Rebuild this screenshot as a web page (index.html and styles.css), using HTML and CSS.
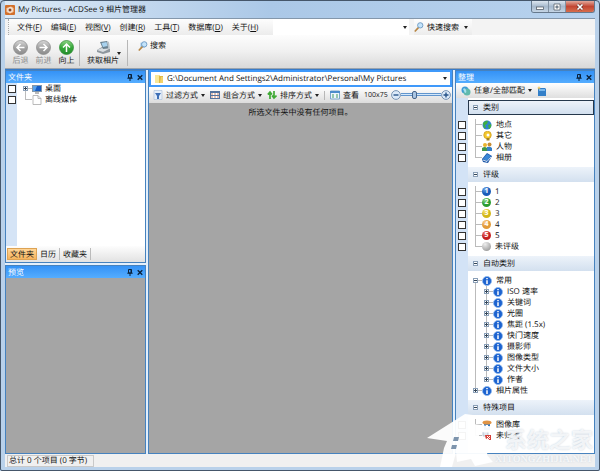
FILE: index.html
```html
<!DOCTYPE html>
<html lang="zh-CN">
<head>
	<meta charset="UTF-8">
	<title>My Pictures - ACDSee 9 相片管理器</title>
	<link rel="stylesheet" href="styles.css">
</head>
<body>
<svg class="defs" aria-hidden="true">
	<defs>
		<linearGradient id="grey" x2="0" y2="1"><stop stop-color="#d8d8d8"/><stop offset=".5" stop-color="#a4a4a4"/><stop offset="1" stop-color="#8c8c8c"/></linearGradient>
		<linearGradient id="green" x2="0" y2="1"><stop stop-color="#8fd487"/><stop offset=".5" stop-color="#36a83a"/><stop offset="1" stop-color="#248c2c"/></linearGradient>
	</defs>
	<symbol id="info" viewBox="0 0 10 10"><circle cx="5" cy="5" r="4.5" fill="#1d63cf" stroke="#8bb7ee" stroke-width=".8"/><path d="M5 2v1.300M5 4.200v3.800" fill="none" stroke="#fff" stroke-width="1.5"/></symbol>
	<symbol id="find" viewBox="0 0 12 12"><path d="M5 7 1.5 10.8" stroke="#b88745" stroke-width="2" stroke-linecap="round"/><circle cx="7.5" cy="4" r="3.2" fill="#c3e3fa" stroke="#6492bd"/></symbol>
	<symbol id="pin" viewBox="0 0 6 7"><path d="M1.5 .5h3v3.4h-3zM.3 4.2h5.4M3 4v3M4 .5v3" fill="none" stroke="#0a2038"/></symbol>
	<symbol id="cross" viewBox="0 0 6 6"><path d="m.7.7 4.6 4.6m0-4.6L.7 5.3" stroke="#0a2038" stroke-width="1.3"/></symbol>
</svg>
<div class="window">
	<header class="title">
		<svg class="logo" viewBox="0 0 10 10"><rect width="10" height="10" rx="1" fill="#d2702d"/><path d="M1.5 3 6 1.5 8.5 3v4L5 8.5 1.5 7z" fill="#f7d0ad"/><circle cx="5" cy="5" r="2" fill="#8f4824" stroke="#fff" stroke-width=".8"/></svg>
		<h1>My Pictures - ACDSee 9 相片管理器</h1>
		<div class="caption">
			<button aria-label="最小化"><svg viewBox="0 0 10 8"><rect x="1.5" y="4" width="7" height="2.5" fill="#fff" stroke="#59626c" stroke-width=".8"/></svg></button>
			<button aria-label="最大化"><svg viewBox="0 0 10 8"><path d="M2 1h6v6H2zM4 3h2v2H4z" fill="#fff" fill-rule="evenodd" stroke="#59626c" stroke-width=".8"/></svg></button>
			<button class="quit" aria-label="关闭"><svg viewBox="0 0 10 8"><path d="m2.5 1.5 5 5m0-5-5 5" stroke="#5f2a25" stroke-width="2.8"/><path d="m2.5 1.5 5 5m0-5-5 5" stroke="#fff" stroke-width="1.7"/></svg></button>
		</div>
	</header>
	<div class="client">
		<div class="menubar">
			<nav class="menu">
				<button>文件(<u>F</u>)</button>
				<button>编辑(<u>E</u>)</button>
				<button>视图(<u>V</u>)</button>
				<button>创建(<u>R</u>)</button>
				<button>工具(<u>T</u>)</button>
				<button>数据库(<u>D</u>)</button>
				<button>关于(<u>H</u>)</button>
			</nav>
			<div class="combo query"><select aria-label="搜索内容"><option></option></select></div>
			<button class="quick drop"><svg class="icon"><use href="#find"/></svg>快速搜索</button>
		</div>
		<div class="toolbar">
			<button class="big" disabled><svg viewBox="0 0 15 15"><circle cx="7.5" cy="7.5" r="7" fill="url(#grey)" stroke="#888" stroke-width=".7"/><path d="M11.5 7.5H4M7.5 4 4 7.5 7.5 11" fill="none" stroke="#fff" stroke-width="1.5"/></svg>后退</button>
			<button class="big" disabled><svg viewBox="0 0 15 15"><circle cx="7.5" cy="7.5" r="7" fill="url(#grey)" stroke="#888" stroke-width=".7"/><path d="M3.5 7.5H11M7.5 4 11 7.5 7.5 11" fill="none" stroke="#fff" stroke-width="1.5"/></svg>前进</button>
			<button class="big"><svg viewBox="0 0 15 15"><circle cx="7.5" cy="7.5" r="7" fill="url(#green)" stroke="#2c8a32" stroke-width=".7"/><path d="M7.5 12V4M4 7.5 7.5 4 11 7.5" fill="none" stroke="#fff" stroke-width="1.5"/></svg>向上</button>
			<span class="rule"></span>
			<button class="big get drop"><svg viewBox="0 0 15 15"><path d="m1 10 5-3 8 2v3l-7 2-6-2z" fill="#8e979e"/><path d="m1 10 5-2 7 1-6 3z" fill="#d9dee1"/><path d="m4 2 7-1 2 7-6 1z" fill="#69818f"/><path d="m5.5 3 5-1 1 4-4.5 1z" fill="#a9d3ef"/><path d="m11 1 2 1 1 7-2-1z" fill="#b8c2c8"/></svg>获取相片</button>
			<span class="rule"></span>
			<button class="search"><svg class="icon" viewBox="0 0 12 12"><path d="M3 2h5v6H3z" fill="#9cc5e6"/><use href="#find"/></svg>搜索</button>
		</div>
		<main class="panes">
			<div class="side">
				<section class="panel folders">
					<h2>文件夹<button aria-label="固定文件夹"><svg><use href="#pin"/></svg></button><button aria-label="关闭文件夹"><svg><use href="#cross"/></svg></button></h2>
					<ul class="tree">
						<li><input type="checkbox" id="desk"><i class="branch first"></i><i class="plus"></i><label for="desk"><svg class="icon" viewBox="0 0 10 10"><path d="M0 1h10v7H0z" fill="#8296a8"/><path d="M1 2h8v5H1z" fill="#155cc4"/><path d="M1 2h4L3 7H1z" fill="#56a2ec"/><path d="M3 9h4" stroke="#777"/></svg>桌面</label></li>
						<li><input type="checkbox" id="offline"><i class="branch last"></i><label for="offline"><svg class="icon" viewBox="0 0 10 10"><path d="M1 .5h5l3 3v6H1zM6 .5v3h3" fill="#fff" stroke="#aaa" stroke-width=".8"/></svg>离线媒体</label></li>
					</ul>
					<div class="tabs"><button class="active">文件夹</button><button>日历</button><button>收藏夹</button></div>
				</section>
				<section class="panel preview">
					<h2>预览<button aria-label="固定预览"><svg><use href="#pin"/></svg></button><button aria-label="关闭预览"><svg><use href="#cross"/></svg></button></h2>
				</section>
			</div>
			<section class="browser">
				<div class="address">
					<svg class="icon" viewBox="0 0 10 10"><path d="M1 1h4l1 1h3v7H1z" fill="#e0b944"/><path d="M1 1h4v8H1z" fill="#f9e797"/><path d="M7 3h2v6H6z" fill="#f2d36c"/></svg>
					<div class="combo"><select aria-label="路径"><option>G:\Document And Settings2\Administrator\Personal\My Pictures</option></select></div>
				</div>
				<div class="filters">
					<button class="drop"><svg class="icon" viewBox="0 0 10 10"><path d="M1 .5h8v9H1z" fill="#e5eef9" stroke="#a8bed9" stroke-width=".6"/><path d="M2 3h6L6 6v3H4V6z" fill="#3f70b7"/></svg>过滤方式</button>
					<button class="drop"><svg class="icon" viewBox="0 0 10 10"><path d="M0 1h10v8H0z" fill="#54739e"/><path d="M1 3h8v2H1zM1 6h8v2H1z" fill="#fff"/><path d="M1 4h8M1 7h8" stroke="#c8846a" stroke-dasharray="2 1"/></svg>组合方式</button>
					<button class="drop"><svg class="icon" viewBox="0 0 10 10"><path d="M3 9V3M.8 4.5 3 2l2 2.5M7 1v6M5 5.500 7 8l2.500-2.500" fill="none" stroke="#41aa36" stroke-width="1.7"/></svg>排序方式</button>
					<span class="rule"></span>
					<button><svg class="icon" viewBox="0 0 10 10"><path d="M.5 1h9v8h-9z" fill="#eef6fc" stroke="#7aa6cd"/><path d="M0 2h10" stroke="#4c8ccc" stroke-width="2"/><path d="M2 5h2M6 5h2M2 7h2M6 7h2" stroke="#409a63"/></svg>查看</button>
					<label class="zoom"><span>100x75</span>
						<svg viewBox="0 0 10 10"><circle cx="5" cy="5" r="4.4" fill="#dbe9f8" stroke="#7894b4"/><path d="M2.5 5h5" stroke="#275388" stroke-width="1.4"/></svg>
						<input type="range" min="0" max="100" value="32">
						<svg viewBox="0 0 10 10"><circle cx="5" cy="5" r="4.4" fill="#dbe9f8" stroke="#7894b4"/><path d="M2.5 5h5M5 2.5v5" stroke="#275388" stroke-width="1.4"/></svg>
					</label>
				</div>
				<p class="empty">所选文件夹中没有任何项目。</p>
			</section>
			<section class="panel organize">
				<h2>整理<button aria-label="固定整理"><svg><use href="#pin"/></svg></button><button aria-label="关闭整理"><svg><use href="#cross"/></svg></button></h2>
				<div class="match">
					<button class="drop"><svg class="icon" viewBox="0 0 10 10"><circle cx="4" cy="4" r="3.5" fill="#3d9bd8"/><circle cx="6" cy="6" r="3.5" fill="#5fb9ad"/><path d="M2 3q2-2 3 1T4 7z" fill="#a8e1ee"/></svg>任意/全部匹配</button>
					<button aria-label="新建类别"><svg class="icon" viewBox="0 0 10 10"><path d="M1 2h7l1 1v7H1z" fill="#337fc8"/><path d="M2 3h6v2H2z" fill="#79b8ed"/><path d="m2 0 .6 1.400L4 2l-1.400.6L2 4l-.6-1.400L0 2l1.400-.6z" fill="#f2c349"/></svg></button>
				</div>
				<div class="groups">
					<h3 class="current"><i class="minus"></i>类别</h3>
					<ul class="tree">
						<li><input type="checkbox" id="place"><i class="branch"></i><label for="place"><svg class="icon" viewBox="0 0 10 10"><circle cx="5" cy="5" r="4.5" fill="#3083ce"/><path d="M1 3q3-3 5-2L5 4 3 5l1 3-2 0zM6 5l3-1q1 3-2 5z" fill="#3fae43"/></svg>地点</label></li>
						<li><input type="checkbox" id="other"><i class="branch"></i><label for="other"><svg class="icon" viewBox="0 0 10 10"><circle cx="5.5" cy="4" r="3.8" fill="#f4c72c" stroke="#c29112" stroke-width=".6"/><circle cx="6" cy="4" r="1.5" fill="#fff"/><path d="M4.5 7h3v2.5h-3z" fill="#a4821f"/></svg>其它</label></li>
						<li><input type="checkbox" id="people"><i class="branch"></i><label for="people"><svg class="icon" viewBox="0 0 10 10"><circle cx="3" cy="3" r="2" fill="#e9b42e"/><circle cx="7.5" cy="2.5" r="2" fill="#c78d35"/><path d="M0 9V6q3-2 5 0v3z" fill="#40974c"/><path d="M5 8V5q3-1 5 1v3H5z" fill="#347fc7"/></svg>人物</label></li>
						<li><input type="checkbox" id="album"><i class="branch last"></i><label for="album"><svg class="icon" viewBox="0 0 10 10"><path d="m0 6 5-6 5 3-4 7-5-1z" fill="#1c57a8"/><path d="m1 6 4-5 4 2-4 5z" fill="#3b86d6"/><path d="m1 7 4 1.500L9 4" fill="none" stroke="#fff" stroke-width=".8"/></svg>相册</label></li>
					</ul>
					<h3><i class="minus"></i>评级</h3>
					<ul class="tree">
						<li><input type="checkbox" id="r1"><i class="branch"></i><label for="r1"><b class="ball blue">1</b>1</label></li>
						<li><input type="checkbox" id="r2"><i class="branch"></i><label for="r2"><b class="ball green">2</b>2</label></li>
						<li><input type="checkbox" id="r3"><i class="branch"></i><label for="r3"><b class="ball yellow">3</b>3</label></li>
						<li><input type="checkbox" id="r4"><i class="branch"></i><label for="r4"><b class="ball orange">4</b>4</label></li>
						<li><input type="checkbox" id="r5"><i class="branch"></i><label for="r5"><b class="ball red">5</b>5</label></li>
						<li><input type="checkbox" id="r0"><i class="branch last"></i><label for="r0"><b class="ball"></b>未评级</label></li>
					</ul>
					<h3><i class="minus"></i>自动类别</h3>
					<ul class="tree auto">
						<li><i class="branch first"></i><i class="minus"></i><span><svg class="icon"><use href="#info"/></svg>常用</span></li>
						<li class="sub"><i class="branch"></i><i class="plus"></i><span><svg class="icon"><use href="#info"/></svg>ISO 速率</span></li>
						<li class="sub"><i class="branch"></i><i class="plus"></i><span><svg class="icon"><use href="#info"/></svg>关键词</span></li>
						<li class="sub"><i class="branch"></i><i class="plus"></i><span><svg class="icon"><use href="#info"/></svg>光圈</span></li>
						<li class="sub"><i class="branch"></i><i class="plus"></i><span><svg class="icon"><use href="#info"/></svg>焦距 (1.5x)</span></li>
						<li class="sub"><i class="branch"></i><i class="plus"></i><span><svg class="icon"><use href="#info"/></svg>快门速度</span></li>
						<li class="sub"><i class="branch"></i><i class="plus"></i><span><svg class="icon"><use href="#info"/></svg>摄影师</span></li>
						<li class="sub"><i class="branch"></i><i class="plus"></i><span><svg class="icon"><use href="#info"/></svg>图像类型</span></li>
						<li class="sub"><i class="branch"></i><i class="plus"></i><span><svg class="icon"><use href="#info"/></svg>文件大小</span></li>
						<li class="sub"><i class="branch last"></i><i class="plus"></i><span><svg class="icon"><use href="#info"/></svg>作者</span></li>
						<li><i class="branch last"></i><i class="plus"></i><span><svg class="icon"><use href="#info"/></svg>相片属性</span></li>
					</ul>
					<h3><i class="minus"></i>特殊项目</h3>
					<ul class="tree special">
						<li><input type="checkbox" id="lib"><i class="branch"></i><label for="lib"><svg class="icon" viewBox="0 0 10 10"><path d="M2 3h6v7H2z" fill="#2f78c5"/><ellipse cx="5" cy="2.5" rx="4.5" ry="2" fill="#e09445"/><path d="M4 5h2v3H4z" fill="#fff"/></svg>图像库</label></li>
						<li><input type="checkbox" id="uncat"><i class="branch last"></i><label for="uncat"><svg class="icon" viewBox="0 0 10 10"><path d="M1 0h5v5H1z" fill="#e4e9f0" stroke="#99a8ba" stroke-width=".6"/><path d="M3 4h6v5H4z" fill="#d63f37"/><path d="m5 5 3 3m0-3L5 8" stroke="#fff"/></svg>未归类</label></li>
					</ul>
				</div>
			</section>
		</main>
		<footer class="status"><span>总计 0 个项目 (0 字节)</span></footer>
	</div>
	<div class="mark">
		<svg viewBox="0 0 72 54"><path d="M0 25 38 1l8 1v9l23 3-1 6-16-1v6l10 1-2 16 6 7-18 4-4-7-14 3-1-9-4 14H13l4-19 3-7z" fill="#fff" fill-opacity=".95"/><path d="m27 24 5 0-1 4-5 0zm-2 8 5 0-1 4-5 0z" fill="#7d94ad"/></svg>
		<div><strong>系统之家</strong><small>XITONGZHIJIA.NET</small></div>
	</div>
</div>
</body>
</html>
```
FILE: styles.css
```css
*{
	margin: 0;
	padding: 0;
	box-sizing: border-box;
}
html,body{height: 100%;}
body{
	font: 8px/11px "Open Sans", "Noto Sans CJK SC", sans-serif;
	text-rendering: geometricPrecision;
	color: #111;
	background: #b9d1ea;
}
ul{list-style: none;}
h1,h2,h3{font-size: 8px;font-weight: normal;}
button,select,input{font: inherit;color: inherit;text-rendering: inherit;}
button{
	display: flex;
	align-items: center;
	border: 0;
	background: none;
	white-space: nowrap;
}
svg{display: block;flex: none;}
.defs{position: absolute;width: 0;height: 0;}
.icon{width: 10px;height: 10px;}
.drop::after,.combo::after{
	content: "";
	border: 2px solid transparent;
	border-top: 3px solid #222;
	border-bottom: 0;
}
.rule{width: 1px;background: #b7b7b7;}

/* window frame */
.window{
	position: relative;
	display: flex;
	flex-direction: column;
	min-height: 100%;
	padding: 0 4px 3px;
	border: 1px solid #45566a;
	border-radius: 4px 4px 2px 2px;
	background: #b9d1ea;
}
.title{
	display: flex;
	align-items: center;
	gap: 3px;
	height: 17px;
	background: linear-gradient(90deg, #dce9f6, #abc8e7 45%, #b7d2ee);
}
.title h1{flex: 1;}
.logo{width: 10px;height: 10px;}
.caption{
	display: flex;
	align-self: flex-start;
	height: 12px;
	border: 1px solid #66798d;
	border-top: 0;
	border-radius: 0 0 3px 3px;
	overflow: hidden;
}
.caption button{
	width: 17px;
	justify-content: center;
	background: linear-gradient(#dce6f0, #a6b9cd 50%, #c5d5e5);
	border-right: 1px solid #8292a3;
}
.caption svg{width: 10px;height: 8px;}
.caption .quit{
	width: 28px;
	border: 0;
	background: linear-gradient(#e3a99c, #c24633 50%, #d76e4d);
}
.client{
	flex: 1;
	display: flex;
	flex-direction: column;
	background: #f0f0f0;
	border-top: 1px solid #8497ab;
}
.menubar{display: flex;height: 16px;background: #f3f3f3;}
.menu{
	display: flex;
	gap: 9px;
	width: 265px;
	padding-left: 8px;
	margin-left: 3px;
	border-left: 1px dotted #aaa;
	background: linear-gradient(#fdfdfd, #ececec);
}
.combo{display: flex;align-items: center;background: #fff;}
.combo select{
	appearance: none;
	border: 0;
	outline: 0;
	flex: 1;
	min-width: 0;
	background: none;
}
.query{width: 136px;padding-right: 2px;}
.quick{gap: 3px;margin-left: 5px;padding-right: 4px;background: linear-gradient(#fdfdfd, #ececec);}
.quick::after{margin-left: 2px;}
.toolbar{
	display: flex;
	height: 34px;
	padding: 5px 4px 2px;
	border-bottom: 1px solid #9aa4af;
	background: linear-gradient(#fdfdfd, #f0f0f0 50%, #d9d9d9);
}
.big{
	flex-direction: column;
	width: 23px;
}
.big svg{width: 15px;height: 15px;}
.big:disabled{color: #8b8b8b;}
.toolbar .rule{margin-left: 1px;}
.get{position: relative;width: 46px;}
.get::after{position: absolute;right: 5px;top: 12px;}
.search{align-self: flex-start;gap: 2px;margin-left: 10px;}

/* panes */
.panes{
	flex: 1;
	display: grid;
	grid-template-columns: 141px 1fr 140px;
	gap: 2px;
	border-top: 1px solid #377bc9;
	background: #e3effb;
}
.side{display: flex;flex-direction: column;gap: 2px;}
.panel{
	display: flex;
	flex-direction: column;
	border: 1px solid #4682be;
	background: #fff;
}
.panel h2{
	display: flex;
	align-items: center;
	gap: 4px;
	height: 12px;
	padding: 0 2px;
	color: #fff;
	background: linear-gradient(#3492f6, #55adff);
}
.panel h2 svg{width: 6px;height: 7px;}
.panel h2 button:first-of-type{margin-left: auto;}
.folders{height: 193px;}
.folders .tree{
	flex: 1;
	background: linear-gradient(90deg, #d5e4f6 11px, #fff 11px);
}
.folders li{height: 12px;}
.folders .tree label{gap: 3px;}
.tabs{
	display: flex;
	height: 16px;
	padding: 2px 1px;
	background: linear-gradient(#fdfdfd, #e2e2e2);
}
.tabs button{padding: 0 3px;border-right: 1px solid #bbb;}
.tabs .active{border: 1px solid #dda354;padding: 0 2px;background: linear-gradient(#ffd596, #f6b45e);}
.preview{flex: 1;background: #a5a5a5;}
.browser{
	display: flex;
	flex-direction: column;
	min-width: 0;
	border: 1px solid #4682be;
	border-top: 0;
	background: #a5a5a5;
}
.address{
	display: flex;
	align-items: center;
	height: 17px;
	padding-left: 3px;
	border: 2px solid #3f99fa;
	background: #fff;
}
.address .combo{flex: 1;margin-left: 3px;padding-right: 3px;}
.filters{
	display: flex;
	align-items: center;
	height: 16px;
	padding: 0 1px 0 4px;
	background: linear-gradient(#fff, #dcdcdc);
}
.filters button{gap: 3px;margin-right: 5px;}
.filters .rule{height: 9px;margin-right: 5px;}
.zoom{
	display: flex;
	align-items: center;
	flex: 1;
	font-size: 7px;
	min-width: 0;
}
.zoom span{margin-right: auto;}
.zoom svg{width: 10px;height: 10px;}
.zoom input{
	appearance: none;
	width: 40px;
	height: 8px;
	background: linear-gradient(transparent 2px, #6195cd 2px, #6195cd 3px, #d4e8fb 3px, #d4e8fb 4px, #6195cd 4px, #6195cd 5px, transparent 5px);
}
.zoom input::-webkit-slider-thumb{
	appearance: none;
	width: 5px;
	height: 8px;
	border: 1px solid #48658a;
	border-radius: 2px;
	background: #a9c5e3;
}
.empty{padding-top: 4px;text-align: center;}

/* trees */
.tree li{
	position: relative;
	display: flex;
	align-items: center;
	height: 11px;
	padding-left: 19px;
	white-space: nowrap;
}
.tree label,.tree span{display: flex;align-items: center;gap: 4px;}
.tree input{
	appearance: none;
	position: absolute;
	left: 2px;
	width: 8px;
	height: 8px;
	border: 1px solid #333;
	background: #fff;
}
.branch{
	align-self: stretch;
	width: 7px;
	background:
		linear-gradient(#bbb, #bbb) 0 0 / 1px 100% no-repeat,
		linear-gradient(#bbb, #bbb) 0 5px / 7px 1px no-repeat;
}
.branch.last{background-size: 1px 6px, 7px 1px;}
.branch.first{background-position: 0 6px, 0 5px;}
.plus,.minus{
	width: 5px;
	height: 5px;
	border: 1px solid #8ba0b8;
	background: linear-gradient(#345, #345) center / 3px 1px no-repeat #fff;
}
.plus{
	background:
		linear-gradient(#345, #345) center / 3px 1px no-repeat,
		linear-gradient(#345, #345) center / 1px 3px no-repeat #fff;
}
.tree .plus,.tree .minus{position: absolute;left: 17px;}

/* organize */
.match{
	display: flex;
	gap: 5px;
	height: 15px;
	padding: 0 5px;
	background: linear-gradient(#fff, #dfdfdf);
}
.match button{gap: 3px;}
.groups{
	flex: 1;
	padding: 2px 0 0;
	background: linear-gradient(90deg, #d3e3f6 12px, #fff 12px);
}
.groups h3{
	display: flex;
	align-items: center;
	gap: 5px;
	height: 15px;
	margin-left: 12px;
	padding-left: 5px;
	background: linear-gradient(#edf3fa, #d3e0ef);
}
.groups .current{border: 1px solid #26384c;padding-left: 4px;}
.groups .tree{padding: 4px 0;}
.groups .auto .sub{padding-left: 30px;}
.auto .sub .plus{left: 28px;}
.auto .sub::before{
	content: "";
	position: absolute;
	left: 19px;
	width: 1px;
	height: 11px;
	background: #bbb;
}
.ball{
	width: 9px;
	height: 9px;
	border-radius: 50%;
	background: radial-gradient(circle at 35% 25%, #eee, #bbb 50%, #888);
	color: #fff;
	font-size: 7px;
	line-height: 9px;
	text-align: center;
}
.blue{background: radial-gradient(circle at 35% 25%, #6ca5e8, #185bb8 50%);}
.green{background: radial-gradient(circle at 35% 25%, #8dd987, #2b9c31 50%);}
.yellow{background: radial-gradient(circle at 35% 25%, #f9e87a, #d3b719 50%);}
.orange{background: radial-gradient(circle at 35% 25%, #fbcd8c, #e29a38 50%);}
.red{background: radial-gradient(circle at 35% 25%, #ee7b73, #c41f20 50%);}
.status{display: flex;height: 13px;padding: 1px 2px 0;}
.status span{padding: 0 6px 0 1px;border: 1px solid #c9c9c9;line-height: 10px;}

/* site mark over the corner */
.mark{
	position: absolute;
	right: 6px;
	bottom: 3px;
	display: flex;
	align-items: flex-end;
	pointer-events: none;
	color: rgba(255,255,255,.75);
	text-shadow: 0 0 2px #c3cfdb;
}
.mark svg{width: 72px;height: 54px;}
.mark div{
	display: flex;
	flex-direction: column;
	align-items: flex-end;
	gap: 4px;
	margin-left: -4px;
	padding-bottom: 2px;
}
.mark strong{font-size: 22px;line-height: 22px;}
.mark small{font: bold 10px/10px "Liberation Serif", serif;}
```
